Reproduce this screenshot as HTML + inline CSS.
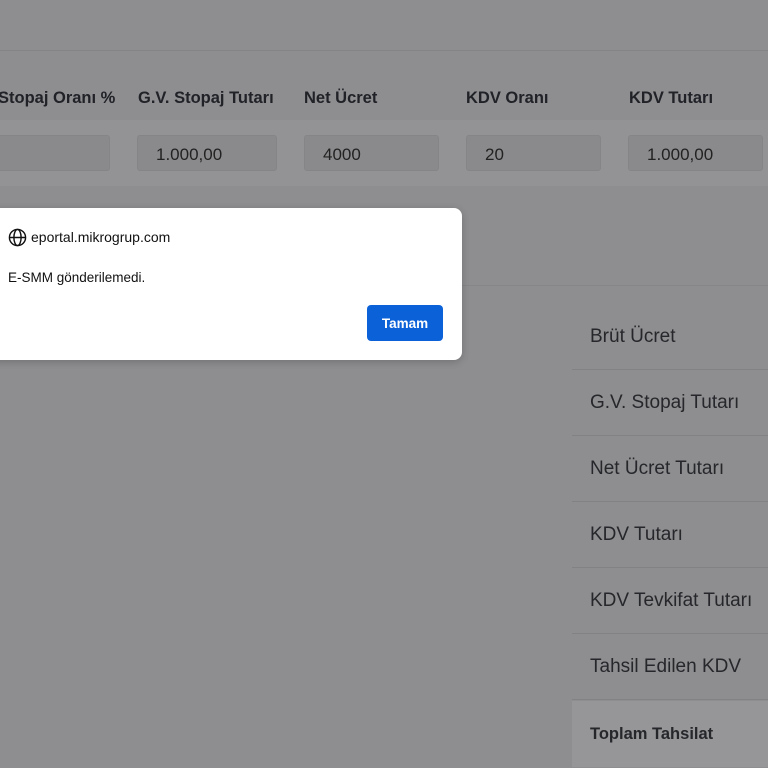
<!DOCTYPE html>
<html><head><meta charset="utf-8"><style>
body{margin:0;width:768px;height:768px;background:#8e8e90;position:relative;overflow:hidden;font-family:"Liberation Sans",sans-serif;color:#1f2024}
.a{position:absolute}
.h{font-weight:bold;font-size:16.5px;top:89px;color:#202228}
.inp{position:absolute;top:135px;height:36px;background:#8a8a8c;border:1px solid #858587;border-radius:3px;box-sizing:border-box;font-size:17px;line-height:37px;padding-left:18px;color:#222}
.r{position:absolute;left:572px;width:196px;height:66px;border-bottom:1px solid #828284;box-sizing:border-box;font-size:19px;color:#26272b;padding-left:18px;line-height:66px}
</style></head><body>
<div class="a" style="left:0;top:50px;width:768px;height:1px;background:#848486"></div>
<div class="a" style="left:0;top:120px;width:768px;height:66px;background:#939395"></div>
<div class="a h" style="left:-2px">Stopaj Oranı %</div>
<div class="a h" style="left:138px">G.V. Stopaj Tutarı</div>
<div class="a h" style="left:304px">Net Ücret</div>
<div class="a h" style="left:466px">KDV Oranı</div>
<div class="a h" style="left:629px">KDV Tutarı</div>
<div class="inp" style="left:-5px;width:115px"></div>
<div class="inp" style="left:137px;width:140px">1.000,00</div>
<div class="inp" style="left:304px;width:135px">4000</div>
<div class="inp" style="left:466px;width:135px">20</div>
<div class="inp" style="left:628px;width:135px">1.000,00</div>
<div class="a" style="left:0;top:285px;width:768px;height:1px;background:#868688"></div>
<div class="r" style="top:304px">Brüt Ücret</div>
<div class="r" style="top:370px">G.V. Stopaj Tutarı</div>
<div class="r" style="top:436px">Net Ücret Tutarı</div>
<div class="r" style="top:502px">KDV Tutarı</div>
<div class="r" style="top:568px">KDV Tevkifat Tutarı</div>
<div class="r" style="top:634px">Tahsil Edilen KDV</div>
<div class="r" style="top:701px;background:#969698;font-weight:bold;font-size:16.5px;border:none">Toplam Tahsilat</div>
<div class="a" style="left:-10px;top:208px;width:472px;height:152px;background:#fff;border-radius:8px;box-shadow:0 2px 8px rgba(0,0,0,.2)"></div>
<svg class="a" style="left:8px;top:228px" width="19" height="19" viewBox="0 0 20 20" fill="none" stroke="#111" stroke-width="1.5"><circle cx="10" cy="10" r="8.5"/><ellipse cx="10" cy="10" rx="3.8" ry="8.5"/><path d="M1.5 10h17"/></svg>
<div class="a" style="left:31px;top:229px;font-size:14px;color:#111">eportal.mikrogrup.com</div>
<div class="a" style="left:8px;top:270px;font-size:13.5px;color:#111">E-SMM gönderilemedi.</div>
<div class="a" style="left:367px;top:305px;width:76px;height:36px;background:#0b62d8;border-radius:4px;color:#fff;font-size:13.5px;font-weight:bold;text-align:center;line-height:37px">Tamam</div>
</body></html>
